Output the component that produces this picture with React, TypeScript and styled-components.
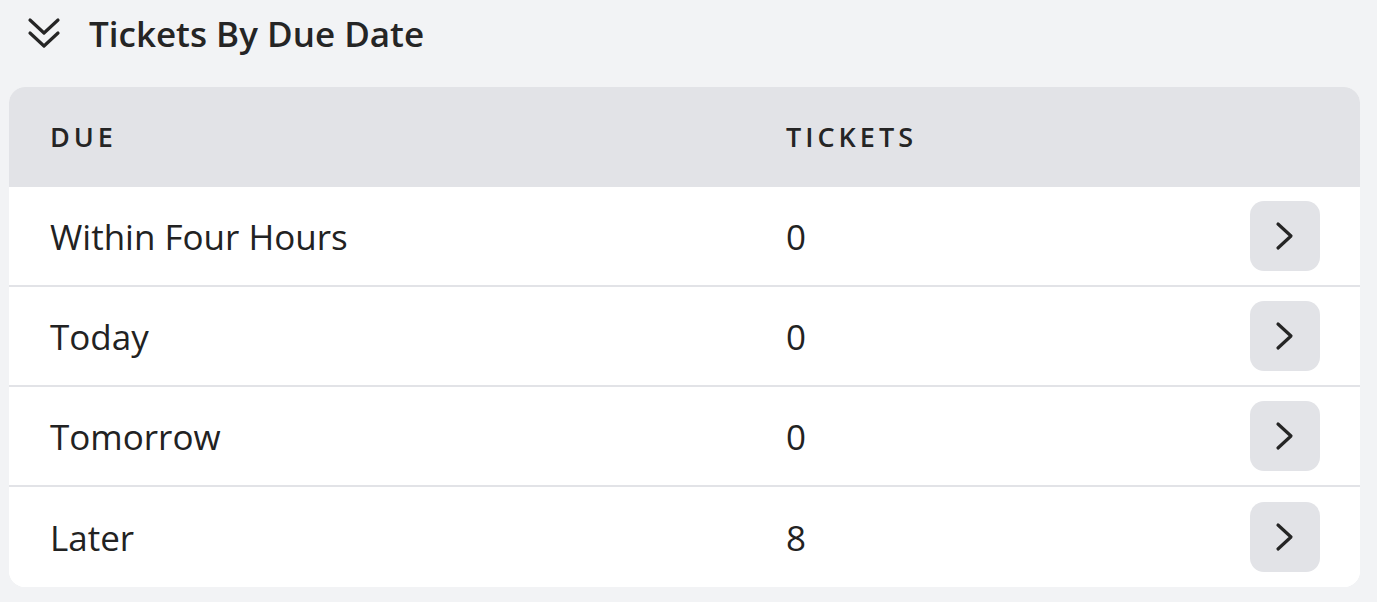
import styled, { createGlobalStyle } from 'styled-components';

const GlobalStyle = createGlobalStyle`
  html, body {
    margin: 0;
    padding: 0;
    background: #f2f3f5;
    font-family: 'Open Sans', 'Noto Sans', sans-serif;
    color: #222222;
  }
`;

const Page = styled.div`
  padding: 0 17px 16px 9px;
`;

const TitleBar = styled.div`
  display: flex;
  align-items: center;
  gap: 28px;
  height: 66px;
  padding-left: 18px;
  margin-bottom: 21px;
`;

const Title = styled.h2`
  margin: 0;
  font-size: 35px;
  font-weight: 600;
  color: #252525;
`;

const Card = styled.div`
  background: #ffffff;
  border-radius: 16px;
  overflow: hidden;
`;

const Row = styled.div<{ $head?: boolean }>`
  display: grid;
  grid-template-columns: 736px 1fr 70px;
  align-items: center;
  height: 100px;
  box-sizing: border-box;
  padding: 0 40px 0 41px;
  background: ${(p) => (p.$head ? '#e2e3e7' : '#ffffff')};
  border-bottom: 2px solid #e2e3e7;

  &:last-child {
    border-bottom: none;
  }
`;

const HeadCell = styled.div`
  font-size: 27px;
  font-weight: 600;
  letter-spacing: 4px;
  text-transform: uppercase;
  color: #252525;
`;

const Cell = styled.div`
  font-size: 35px;
  color: #222222;
`;

const GoButton = styled.button`
  width: 70px;
  height: 70px;
  border: none;
  border-radius: 14px;
  background: #e2e3e7;
  display: flex;
  align-items: center;
  justify-content: center;
  cursor: pointer;
  padding: 0;
`;

const rows = [
  { label: 'Within Four Hours', count: 0 },
  { label: 'Today', count: 0 },
  { label: 'Tomorrow', count: 0 },
  { label: 'Later', count: 8 },
];

const DoubleChevron = () => (
  <svg width="34" height="34" viewBox="0 0 34 34" fill="none" stroke="#252525" strokeWidth="3.2" strokeLinecap="round" strokeLinejoin="round">
    <polyline points="3,4 17,17 31,4" />
    <polyline points="3,17 17,30 31,17" />
  </svg>
);

const ChevronRight = () => (
  <svg width="24" height="32" viewBox="0 0 24 32" fill="none" stroke="#252525" strokeWidth="3.2" strokeLinecap="round" strokeLinejoin="round">
    <polyline points="5,4 18,16 5,28" />
  </svg>
);

const App = () => {
  return (
    <>
      <GlobalStyle />
      <Page>
        <TitleBar>
          <DoubleChevron />
          <Title>Tickets By Due Date</Title>
        </TitleBar>
        <Card>
          <Row $head>
            <HeadCell>Due</HeadCell>
            <HeadCell>Tickets</HeadCell>
            <div />
          </Row>
          {rows.map((r) => (
            <Row key={r.label}>
              <Cell>{r.label}</Cell>
              <Cell>{r.count}</Cell>
              <GoButton aria-label={`Open ${r.label}`}>
                <ChevronRight />
              </GoButton>
            </Row>
          ))}
        </Card>
      </Page>
    </>
  );
};

export default App;
